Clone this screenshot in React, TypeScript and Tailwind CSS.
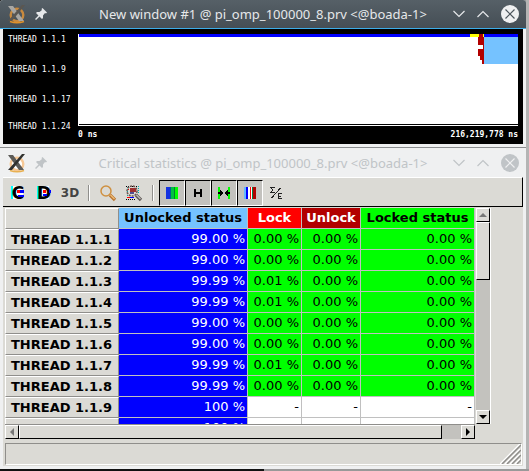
import type { ReactNode } from "react";

const TITLE_FONT = "font-['Noto_Sans',sans-serif]";

function XLogo({ dim = false }: { dim?: boolean }) {
  return (
    <svg width="20" height="20" viewBox="0 0 20 20" aria-hidden="true">
      <circle cx="10" cy="11" r="6.3" fill={dim ? "#fff" : "none"} stroke={dim ? "#f6c896" : "#c98a3e"} strokeWidth="2.400" />
      <path d="M3 17.500 Q10 20 17 17.500" stroke={dim ? "#e8b050" : "#e0912a"} strokeWidth="1.600" fill="none" />
      <path d="M1 2h5l11 15h-5z" fill={dim ? "#5c5b58" : "#a9a7a3"} />
      <path d="M18 1h-3L1 17h4z" fill={dim ? "#323230" : "#5b5751"} />
    </svg>
  );
}

function Pin() {
  return (
    <svg width="12" height="12" viewBox="0 0 12 12" fill="currentColor" aria-hidden="true">
      <path d="M7.5 0L12 4.5L11 5.5L10 5L8 7.5V10L7 11L4.5 8.5L1 12L0 11L3.5 7.5L1 5L2 4H4.5L7 2L6.5 1Z" />
    </svg>
  );
}

function TitleBar({ title, active }: { title: string; active: boolean }) {
  const tone = active
    ? "bg-linear-to-b from-[#566067] to-[#454e55] text-[#e6e8ea] border-b border-[#3daee9] rounded-t-[3px]"
    : "bg-[#eff0f1] text-[#c0c4c7]";
  return (
    <header className={`${tone} ${TITLE_FONT} flex h-[29px] items-center px-[7px] text-[13px] leading-5`}>
      <div className="flex flex-1 items-center gap-2">
        <XLogo dim={!active} />
        <button aria-label="Keep on all desktops" className="flex size-4 items-center">
          <Pin />
        </button>
      </div>
      <h1 className="whitespace-nowrap">{title}</h1>
      <div className="flex flex-1 items-center justify-end gap-3">
        <button aria-label="Minimize">
          <svg width="12" height="8" viewBox="0 0 12 8" fill="none" stroke="currentColor" strokeWidth="1.200"><path d="M.5 1L6 6.5L11.500 1" /></svg>
        </button>
        <button aria-label="Maximize">
          <svg width="12" height="8" viewBox="0 0 12 8" fill="none" stroke="currentColor" strokeWidth="1.200"><path d="M.5 7L6 1.500L11.500 7" /></svg>
        </button>
        <button aria-label="Close">
          <svg width="18" height="18" viewBox="0 0 18 18">
            <circle cx="9" cy="9" r="9" fill={active ? "#eff0f1" : "#c0c4c7"} />
            <path d="M4.500 4.500L13.500 13.500M13.500 4.500L4.500 13.500" stroke={active ? "#4d565d" : "#eff0f1"} strokeWidth="1.200" />
          </svg>
        </button>
      </div>
    </header>
  );
}

function Timeline() {
  return (
    <div className="mx-[3px] bg-black pt-[5px] pr-[5px] pb-1 pl-[5px] font-['DejaVu_Sans_Mono',monospace] text-[8px] leading-[10px] text-white">
      <div className="flex">
        <ul className="-mb-[6px] flex w-[70px] shrink-0 flex-col pt-px whitespace-nowrap">
          <li className="h-[30px]">THREAD 1.1.1</li>
          <li className="h-[30px]">THREAD 1.1.9</li>
          <li className="h-[27px]">THREAD 1.1.17</li>
          <li className="h-[10px]">THREAD 1.1.24</li>
        </ul>
        <div className="grow border-b border-l border-white">
          <div className="flex h-[91px] items-start justify-end border-b border-black bg-white">
            <div className="h-[3px] grow bg-[#0000ff]" />
            <svg width="48" height="30" viewBox="0 0 48 30" shapeRendering="crispEdges" aria-hidden="true">
              <path fill="#ff0" d="M0 0h14v3H0z" />
              <path fill="#00f" d="M14 0h34v3H14z" />
              <path fill="#75c2ff" d="M14 3h34v27H14z" />
              <path fill="#b20000" d="M9 0h4v3h1v27h-2v-4h-2v-4h-2v-7h5v-4H8V3h1z" />
              <path fill="#ff0" d="M13 0h1v3h-1z" />
            </svg>
          </div>
        </div>
      </div>
      <div className="flex justify-between pt-[4px] pl-[70px] font-bold">
        <span>0 ns</span>
        <span>216,219,778 ns</span>
      </div>
    </div>
  );
}

function Tool({ label, pressed, children }: { label: string; pressed?: boolean; children: ReactNode }) {
  const look = pressed
    ? "border border-t-black border-l-black border-r-white border-b-white bg-[#c3c2be]"
    : "";
  return (
    <button aria-label={label} aria-pressed={pressed} className={`${look} flex h-[26px] w-[26px] items-center justify-center`}>
      {children}
    </button>
  );
}

function Separator() {
  return (
    <div className="flex h-[26px] w-3 items-center justify-center">
      <div className="h-4 w-[2px] border-l border-[#8f8e8b] bg-white" />
    </div>
  );
}

function LetterIcon({ letter }: { letter: string }) {
  return (
    <svg width="16" height="16" viewBox="0 0 16 16" shapeRendering="crispEdges" aria-hidden="true">
      <path fill="#fff" d="M1 1h12v13H1z" />
      <path fill="#00ffff" d="M1 1h2v13H1z" />
      <text x="8" y="14" textAnchor="middle" fontFamily="DejaVu Sans" fontWeight="bold" fontSize="17" fill="#000">{letter}</text>
      <path fill="#f00" d="M7 5h3v3H7z" />
      <path fill="#0000ff" d={letter === "C" ? "M10 5h4v3h-4zM8 10h6v2H8z" : "M13 5h2v3h-2zM7 9h4v2H7z"} />
    </svg>
  );
}

function Magnifier({ region = false }: { region?: boolean }) {
  return (
    <svg width="18" height="18" viewBox="0 0 18 18" fill="none" aria-hidden="true">
      {region && (
        <g shapeRendering="crispEdges">
          <path d="M1 2h12M1 15h10" stroke="#000" strokeDasharray="1 1" />
          <path d="M2 3v10M13 2v8" stroke="#0aa" strokeDasharray="1 1" />
          <path fill="#a03030" d="M5 4h6v4H5z" />
          <path fill="#505090" d="M5 8h4v2H5z" />
          <path d="M2 13h3M3 5h1" stroke="#f00" />
          <path d="M5 13h4" stroke="#00f" />
        </g>
      )}
      <circle cx="7" cy="7" r="5" stroke={region ? "#6e5650" : "#cf9040"} strokeWidth="1.500" strokeDasharray={region ? "2 1" : undefined} />
      <path d="M11 11l5 5" stroke={region ? "#5a5553" : "#b9732e"} strokeWidth="3.200" />
      <path d="M11.500 11l4 4" stroke={region ? "#c2bcb8" : "#eebe7a"} strokeWidth="1.200" />
    </svg>
  );
}

function Toolbar() {
  return (
    <div role="toolbar" className="flex h-[30px] border-t border-r border-b border-t-white border-r-black border-b-black bg-[#dbdad5] pt-[2px] pl-[2px]">
      <Tool label="Control window"><LetterIcon letter="C" /></Tool>
      <Tool label="Data window"><LetterIcon letter="D" /></Tool>
      <Tool label="3D">
        <span className="font-['DejaVu_Sans',sans-serif] text-[12px] font-bold leading-4 text-[#444]">3D</span>
      </Tool>
      <Separator />
      <Tool label="Zoom"><Magnifier /></Tool>
      <Tool label="Zoom region"><Magnifier region /></Tool>
      <Separator />
      <Tool label="Gradient" pressed>
        <svg width="12" height="12" viewBox="0 0 12 12" shapeRendering="crispEdges">
          <path fill="#1432e0" d="M0 0h4v12H0z" /><path fill="#006090" d="M4 0h1v12H4z" />
          <path fill="#00c040" d="M5 0h4v12H5z" /><path fill="#008030" d="M8 0h1v12H8z" /><path fill="#00ff00" d="M9 0h3v12H9z" />
        </svg>
      </Tool>
      <Tool label="Horizontal" pressed>
        <svg width="8" height="8" viewBox="0 0 8 8" shapeRendering="crispEdges">
          <path d="M0 0h2v3h4V0h2v8H6V5H2v3H0z" />
        </svg>
      </Tool>
      <Tool label="Hide empty columns" pressed>
        <svg width="12" height="12" viewBox="0 0 12 12" shapeRendering="crispEdges">
          <path fill="#0f0" d="M0 0h2v12H0zM10 0h2v12h-2z" />
          <path d="M0 5h2V3h1v1h1v1h1v2H4v1H3v1H2V7H0zM12 5h-2V3H9v1H8v1H7v2h1v1h1v1h1V7h2z" />
        </svg>
      </Tool>
      <Tool label="Column colors" pressed>
        <svg width="12" height="12" viewBox="0 0 12 12" shapeRendering="crispEdges">
          <path fill="#66b8ff" d="M0 0h2v12H0z" /><path fill="#00f" d="M2 0h2v12H2z" /><path fill="#fff" d="M4 0h2v12H4zM7 0h1v12H7z" />
          <path fill="#f00" d="M6 0h1v12H6z" /><path fill="#008040" d="M8 0h1v12H8z" /><path fill="#b20000" d="M9 0h3v12H9z" />
        </svg>
      </Tool>
      <Tool label="Sum or each">
        <svg width="12" height="12" viewBox="0 0 12 12" fill="none" stroke="#222" shapeRendering="crispEdges">
          <path d="M5 .5H.5L3 3L.5 5.500H5M11.500 6.500H8.500v5h3M8 9h3" />
          <path d="M10.500 1L1.500 11" />
        </svg>
      </Tool>
    </div>
  );
}

const ROWS: [string, string, string, string, string][] = [
  ["THREAD 1.1.1", "99.00 %", "0.00 %", "0.00 %", "0.00 %"],
  ["THREAD 1.1.2", "99.00 %", "0.00 %", "0.00 %", "0.00 %"],
  ["THREAD 1.1.3", "99.99 %", "0.01 %", "0.00 %", "0.00 %"],
  ["THREAD 1.1.4", "99.99 %", "0.01 %", "0.00 %", "0.00 %"],
  ["THREAD 1.1.5", "99.00 %", "0.00 %", "0.00 %", "0.00 %"],
  ["THREAD 1.1.6", "99.00 %", "0.00 %", "0.00 %", "0.00 %"],
  ["THREAD 1.1.7", "99.99 %", "0.01 %", "0.00 %", "0.00 %"],
  ["THREAD 1.1.8", "99.99 %", "0.00 %", "0.00 %", "0.00 %"],
  ["THREAD 1.1.9", "100 %", "-", "-", "-"],
  ["THREAD 1.1.10", "100 %", "-", "-", "-"],
];

const HEAD = "h-[21px] border-r border-b border-[#c0c0c0] p-0 font-bold";

function StatsTable() {
  return (
    <div className="h-[216px] overflow-hidden">
      <table className="w-[470px] table-fixed border-separate border-spacing-0 whitespace-nowrap text-[13px] leading-4 text-black">
        <colgroup>
          <col className="w-[114px]" />
          <col className="w-[129px]" />
          <col className="w-[54px]" />
          <col className="w-[59px]" />
          <col className="w-[114px]" />
        </colgroup>
        <thead>
          <tr>
            <td className="h-[21px] border border-t-white border-l-white border-r-[#8f8e8b] border-b-[#8f8e8b] p-0" />
            <th scope="col" className={`${HEAD} bg-[#75c2ff]`}>Unlocked status</th>
            <th scope="col" className={`${HEAD} bg-[#ff0000] text-white`}>Lock</th>
            <th scope="col" className={`${HEAD} bg-[#b20000] text-white`}>Unlock</th>
            <th scope="col" className={`${HEAD} bg-[#00ff00]`}>Locked status</th>
          </tr>
        </thead>
        <tbody>
          {ROWS.map(([name, ...values]) => (
            <tr key={name}>
              <th scope="row" className="h-[21px] border border-t-white border-l-white border-r-[#8f8e8b] border-b-[#8f8e8b] p-0 pl-[5px] text-left font-bold">
                {name}
              </th>
              {values.map((value, i) => {
                const fill = i === 0 ? "bg-[#0000ff] text-white" : value === "-" ? "bg-white" : "bg-[#00ff00]";
                return (
                  <td key={i} className={`${fill} h-[21px] border-r border-b border-[#c0c0c0] p-0 pr-[2px] text-right`}>
                    {value}
                  </td>
                );
              })}
            </tr>
          ))}
        </tbody>
      </table>
    </div>
  );
}

const RAISED = "border border-t-white border-l-white border-r-black border-b-black bg-[#dbdad5]";

function Arrow({ d, label, color = "#000" }: { d: string; label: string; color?: string }) {
  return (
    <button aria-label={label} className={`${RAISED} flex size-[14px] shrink-0 items-center justify-center`}>
      <svg width="8" height="8" viewBox="0 0 8 8" fill={color} aria-hidden="true"><path d={d} /></svg>
    </button>
  );
}

function StatisticsBody() {
  return (
    <div className="mx-[3px] bg-[#dbdad5] pb-px font-['DejaVu_Sans','Verdana',sans-serif]">
      <Toolbar />
      <div className="flex items-start gap-px pt-px pl-[2px]">
        <div className="w-[470px] shrink-0">
          <StatsTable />
          <div className="flex h-[15px] border-t border-[#8f8e8b] bg-[#c3c2be]">
            <Arrow label="Scroll left" d="M6 0v8L2 4z" color="#777" />
            <div className={`${RAISED} h-[14px] w-[423px]`} />
            <div className="grow" />
            <Arrow label="Scroll right" d="M2 0v8L6 4z" />
          </div>
        </div>
        <div className="flex h-[216px] w-[15px] flex-col border-r border-white bg-[#c3c2be]">
          <Arrow label="Scroll up" d="M0 6h8L4 2z" color="#777" />
          <div className={`${RAISED} h-[58px]`} />
          <div className="grow" />
          <Arrow label="Scroll down" d="M0 2h8L4 6z" />
        </div>
      </div>
      <footer className="mt-[4px] mr-px ml-[2px] flex h-[22px] items-end justify-end border border-t-[#8f8e8b] border-l-[#8f8e8b] border-r-white border-b-white">
        <svg width="21" height="20" viewBox="0 0 21 20" fill="none" aria-hidden="true">
          <path d="M0 20L20 0M5 20L20 5M10 20L20 10M15 20L20 15" stroke="#fff" strokeWidth="1.500" />
          <path d="M2 20L21 1M7 20L21 6M12 20L21 11M17 20L21 16" stroke="#8f8e8b" strokeWidth="1.500" />
        </svg>
      </footer>
    </div>
  );
}

export default function App() {
  return (
    <main className="min-h-screen bg-linear-to-r from-[#111] from-50% to-[#999] to-50%">
      <div className="border-r-3 border-[#b4b4b4]">
        <section className="rounded-t-[3px] border-b border-[#8a8c8e] bg-[#eff0f1] pb-[3px]">
          <TitleBar active title="New window #1 @ pi_omp_100000_8.prv <@boada-1>" />
          <Timeline />
        </section>
        <section className="bg-[#eff0f1] pb-[3px]">
          <TitleBar active={false} title="Critical statistics @ pi_omp_100000_8.prv <@boada-1>" />
          <StatisticsBody />
        </section>
      </div>
    </main>
  );
}
